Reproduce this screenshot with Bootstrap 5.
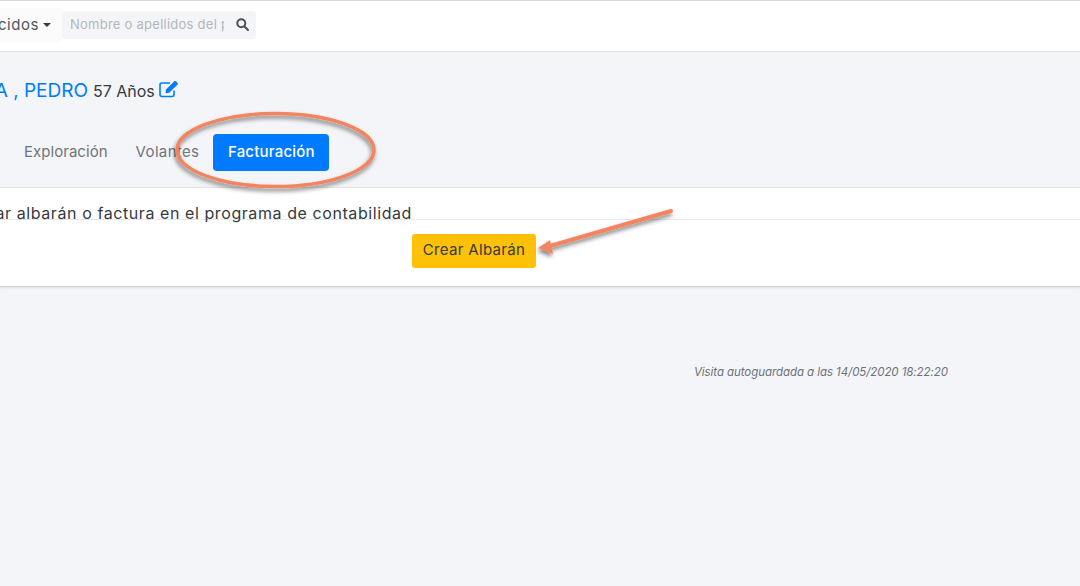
<!DOCTYPE html>
<html lang="es">
<head>
<meta charset="utf-8">
<title>Facturación</title>
<link rel="stylesheet" href="https://cdn.jsdelivr.net/npm/bootstrap@5.3.0/dist/css/bootstrap.min.css">
<style>
html,body{height:100%}
body{font-family:"Inter","Liberation Sans",sans-serif;background:#f4f5f8;color:#343a40;overflow:hidden;position:relative;width:1080px;height:586px}
.top-bar{height:52px;background:#fff;border-top:1px solid #dcdcdc;border-bottom:1px solid #dee0e3;padding-top:10px}
.clip-left{overflow:hidden;display:flex;justify-content:flex-end;white-space:nowrap}
.drop-wrap{width:62px;height:34px;margin-top:-3px;align-items:center;font-size:15px;color:#50565c;padding:0 11px 0 0;letter-spacing:.55px;background:#fbfbfc}
.caret-tri{display:inline-block;margin-left:4px;border-top:4px solid #343a40;border-left:4px solid transparent;border-right:4px solid transparent;vertical-align:2px}
.search-box{width:194px;height:28px;background:#f4f5f8;border-radius:3px}
.search-box .form-control{background:transparent;border:0;font-size:13px;padding:0 0 2px 8px;box-shadow:none;border-radius:0;height:28px;width:162px;flex:none;letter-spacing:.25px}
.search-box .form-control::placeholder{color:#b3b7bc}
.search-btn{width:32px;display:flex;align-items:center;justify-content:center;padding:0 0 1px 5px}
.title-row{padding-top:24px;align-items:center}
.name-clip{width:88px;font-size:19px;color:#007bff;line-height:30px}
.age-text{font-size:16px;color:#343a40;margin-left:5px;line-height:30px}
.edit-ico{margin-left:4px;margin-top:-5px}
.tab-row{margin-top:28px;height:37px;padding-left:9px;align-items:center}
.tab-row .nav-link{color:#6f757b;font-size:15px;padding:0 15px 2px;line-height:35px;letter-spacing:.04px;border-radius:4px}
.tab-row .tab-two{padding-right:14px;margin-left:-2px;letter-spacing:.35px}
.tab-row .nav-link.active{background:#007bff;color:#fff;font-weight:500;width:116px;text-align:center;padding:0 0 2px;letter-spacing:.2px}
.main-panel{margin-top:16px;height:100px;background:#fff;border-top:1px solid #e2e4e8;border-bottom:1px solid #d6d7da;box-shadow:0 1px 2px rgba(0,0,0,.1)}
.head-line{height:32px;border-bottom:1px solid #e6e8ec;width:100%}
.head-clip{width:412px;font-size:16px;line-height:19px;height:37px;padding-top:16px;color:#343a40;letter-spacing:.58px}
.act-btn{margin-left:412px;margin-top:14px;width:124px;height:34px;background:#ffc107;border:0;border-radius:3px;font-size:15px;color:#343a40;padding:0 0 2px;letter-spacing:.33px;display:block}
.save-note{font-size:11.5px;font-style:italic;color:#6c7278;margin:77px 0 0 694px;line-height:16px;white-space:nowrap;letter-spacing:-.07px}
.overlay-art{position:absolute;left:0;top:0;pointer-events:none}
</style>
</head>
<body>
<header class="top-bar d-flex align-items-start">
  <div class="clip-left drop-wrap">Desconocidos<span class="caret-tri align-self-center"></span></div>
  <form class="search-box d-flex" onsubmit="return false">
    <input class="form-control" type="text" placeholder="Nombre o apellidos del paciente" aria-label="Buscar">
    <span class="search-btn">
      <svg width="13" height="13" viewBox="0 0 13 13" fill="none" stroke="#495057" stroke-width="2"><circle cx="5.3" cy="5.3" r="4"/><path d="M8.3 8.3l3.7 3.7" stroke-linecap="round"/></svg>
    </span>
  </form>
</header>
<section class="d-flex title-row">
  <div class="clip-left name-clip">GARCIA , PEDRO</div>
  <span class="age-text">57 Años</span>
  <svg class="edit-ico align-self-center" width="20" height="18" viewBox="0 0 20 18" fill="none">
    <path d="M15 10.5V14.5a2 2 0 0 1-2 2H3a2 2 0 0 1-2-2V5a2 2 0 0 1 2-2h8" stroke="#007bff" stroke-width="1.6"/>
    <path d="M7 9.6L15.4 1.2a1 1 0 0 1 1.4 0l1.8 1.8a1 1 0 0 1 0 1.4L10.2 12.8 6.500 13.300z" fill="#007bff"/>
  </svg>
</section>
<nav class="nav tab-row">
  <a class="nav-link" href="#">Exploración</a>
  <a class="nav-link tab-two" href="#">Volantes</a>
  <a class="nav-link active" href="#">Facturación</a>
</nav>
<section class="main-panel">
  <div class="head-line"><div class="clip-left head-clip">Generar albarán o factura en el programa de contabilidad</div></div>
  <button class="btn act-btn" type="button">Crear Albarán</button>
</section>
<p class="save-note">Visita autoguardada a las 14/05/2020 18:22:20</p>
<svg class="overlay-art" width="1080" height="586" viewBox="0 0 1080 586" fill="none">
  <defs><filter id="sh" x="-10%" y="-30%" width="120%" height="170%"><feDropShadow dx="-1" dy="3" stdDeviation="2" flood-color="#000" flood-opacity=".5"/></filter></defs>
  <g filter="url(#sh)">
    <ellipse cx="275.500" cy="150" rx="98.500" ry="36.500" stroke="#f2845f" stroke-width="3.500"/>
    <path d="M671 211L550 246" stroke="#f2845f" stroke-width="4" stroke-linecap="round"/>
    <path d="M538 248L550 240L553 254z" fill="#f2845f"/>
  </g>
</svg>
<script src="https://cdn.jsdelivr.net/npm/bootstrap@5.3.0/dist/js/bootstrap.bundle.min.js"></script>
</body>
</html>
